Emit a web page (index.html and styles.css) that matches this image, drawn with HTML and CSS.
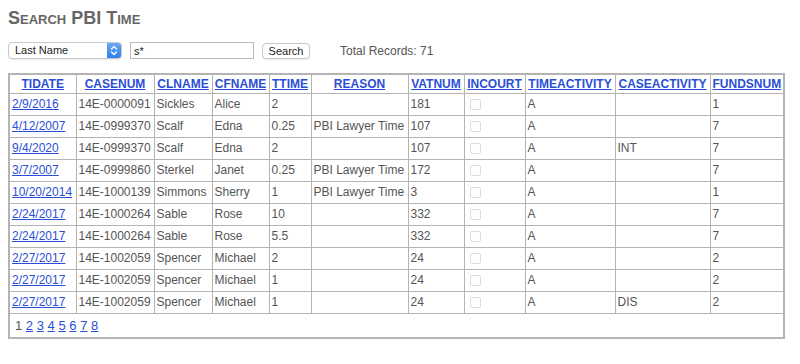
FILE: index.html
```html
<!DOCTYPE html>
<html>
<head>
<meta charset="utf-8">
<title>Search PBI Time</title>
<link rel="stylesheet" href="styles.css">
</head>
<body>
<h1 class="title">Search PBI Time</h1>
<div class="controls">
  <div class="select">
    <span class="select-text">Last Name</span>
    <span class="select-arrow">
      <svg width="8" height="11" viewBox="0 0 8 11"><path d="M1.5 4 L4 1.5 L6.5 4 M1.5 7 L4 9.5 L6.5 7" fill="none" stroke="#fff" stroke-width="1.3" stroke-linecap="round" stroke-linejoin="round"/></svg>
    </span>
  </div>
  <input class="search-input" type="text" value="s*">
  <button class="search-btn" type="button">Search</button>
  <span class="total">Total Records: 71</span>
</div>
<table class="grid">
  <colgroup>
    <col style="width:67px"><col style="width:78px"><col style="width:58px"><col style="width:57px"><col style="width:42px"><col style="width:97px"><col style="width:56px"><col style="width:61px"><col style="width:90px"><col style="width:95px"><col style="width:74px">
  </colgroup>
  <thead>
    <tr>
      <th><a href="#">TIDATE</a></th>
      <th><a href="#">CASENUM</a></th>
      <th><a href="#">CLNAME</a></th>
      <th><a href="#">CFNAME</a></th>
      <th><a href="#">TTIME</a></th>
      <th><a href="#">REASON</a></th>
      <th><a href="#">VATNUM</a></th>
      <th><a href="#">INCOURT</a></th>
      <th><a href="#">TIMEACTIVITY</a></th>
      <th><a href="#">CASEACTIVITY</a></th>
      <th><a href="#">FUNDSNUM</a></th>
    </tr>
  </thead>
  <tbody>
    <tr><td><a href="#">2/9/2016</a></td><td>14E-0000091</td><td>Sickles</td><td>Alice</td><td>2</td><td></td><td>181</td><td><input class="chk" type="checkbox" disabled></td><td>A</td><td></td><td>1</td></tr>
    <tr><td><a href="#">4/12/2007</a></td><td>14E-0999370</td><td>Scalf</td><td>Edna</td><td>0.25</td><td>PBI Lawyer Time</td><td>107</td><td><input class="chk" type="checkbox" disabled></td><td>A</td><td></td><td>7</td></tr>
    <tr><td><a href="#">9/4/2020</a></td><td>14E-0999370</td><td>Scalf</td><td>Edna</td><td>2</td><td></td><td>107</td><td><input class="chk" type="checkbox" disabled></td><td>A</td><td>INT</td><td>7</td></tr>
    <tr><td><a href="#">3/7/2007</a></td><td>14E-0999860</td><td>Sterkel</td><td>Janet</td><td>0.25</td><td>PBI Lawyer Time</td><td>172</td><td><input class="chk" type="checkbox" disabled></td><td>A</td><td></td><td>7</td></tr>
    <tr><td><a href="#">10/20/2014</a></td><td>14E-1000139</td><td>Simmons</td><td>Sherry</td><td>1</td><td>PBI Lawyer Time</td><td>3</td><td><input class="chk" type="checkbox" disabled></td><td>A</td><td></td><td>1</td></tr>
    <tr><td><a href="#">2/24/2017</a></td><td>14E-1000264</td><td>Sable</td><td>Rose</td><td>10</td><td></td><td>332</td><td><input class="chk" type="checkbox" disabled></td><td>A</td><td></td><td>7</td></tr>
    <tr><td><a href="#">2/24/2017</a></td><td>14E-1000264</td><td>Sable</td><td>Rose</td><td>5.5</td><td></td><td>332</td><td><input class="chk" type="checkbox" disabled></td><td>A</td><td></td><td>7</td></tr>
    <tr><td><a href="#">2/27/2017</a></td><td>14E-1002059</td><td>Spencer</td><td>Michael</td><td>2</td><td></td><td>24</td><td><input class="chk" type="checkbox" disabled></td><td>A</td><td></td><td>2</td></tr>
    <tr><td><a href="#">2/27/2017</a></td><td>14E-1002059</td><td>Spencer</td><td>Michael</td><td>1</td><td></td><td>24</td><td><input class="chk" type="checkbox" disabled></td><td>A</td><td></td><td>2</td></tr>
    <tr><td><a href="#">2/27/2017</a></td><td>14E-1002059</td><td>Spencer</td><td>Michael</td><td>1</td><td></td><td>24</td><td><input class="chk" type="checkbox" disabled></td><td>A</td><td>DIS</td><td>2</td></tr>
  </tbody>
  <tfoot>
    <tr><td class="pager" colspan="11"><span class="cur">1</span> <a href="#">2</a> <a href="#">3</a> <a href="#">4</a> <a href="#">5</a> <a href="#">6</a> <a href="#">7</a> <a href="#">8</a></td></tr>
  </tfoot>
</table>
</body>
</html>
```

FILE: styles.css
```css
body {
  margin: 8px;
  font-family: "Liberation Sans", Arial, Helvetica, sans-serif;
  font-size: 12px;
  color: #555;
  background: #fff;
}
.title {
  margin: 0;
  font-size: 18px;
  line-height: 20px;
  font-weight: bold;
  font-variant: small-caps;
  color: #666;
}
.controls {
  display: flex;
  align-items: center;
  margin-top: 14px;
  height: 17px;
}
.select {
  display: flex;
  align-items: stretch;
  width: 114px;
  height: 17px;
  box-sizing: border-box;
  border: 1px solid #c8c8c8;
  border-radius: 4px;
  background: #fff;
  overflow: hidden;
  box-shadow: 0 1px 1px rgba(0,0,0,0.08);
}
.select-text {
  flex: 1;
  font-size: 11px;
  line-height: 15px;
  padding-left: 6px;
  color: #222;
}
.select-arrow {
  width: 14px;
  display: flex;
  align-items: center;
  justify-content: center;
  background: linear-gradient(#6aa8f7, #2f7ef0);
}
.search-input {
  margin: 0 0 0 8px;
  width: 124px;
  height: 17px;
  box-sizing: border-box;
  border: 1px solid #bdbdbd;
  padding: 0 3px;
  font-family: "Liberation Sans", Arial, sans-serif;
  font-size: 11px;
  color: #222;
  outline: none;
}
.search-btn {
  margin: 0 0 0 8px;
  width: 48px;
  height: 16px;
  box-sizing: border-box;
  border: 1px solid #c6c6c6;
  border-radius: 4px;
  background: #fff;
  padding: 0;
  font-family: "Liberation Sans", Arial, sans-serif;
  font-size: 11px;
  color: #222;
  box-shadow: 0 1px 1px rgba(0,0,0,0.08);
}
.total {
  margin-left: 30px;
  font-size: 12px;
  color: #555;
}
.grid {
  margin-top: 14px;
  border-collapse: collapse;
  table-layout: fixed;
  width: 776px;
  border: 2px solid #b4b4b4;
}
.grid th,
.grid td {
  border: 1px solid #b4b4b4;
  padding: 3px 2px;
  line-height: 15px;
  text-align: left;
  white-space: nowrap;
  overflow: hidden;
  vertical-align: middle;
}
.grid th {
  padding: 1px 2px;
  line-height: 16px;
  text-align: center;
  font-weight: bold;
}
.grid a {
  color: #2a4fd6;
  text-decoration: underline;
}
.chk {
  -webkit-appearance: none;
  appearance: none;
  display: block;
  width: 11px;
  height: 11px;
  margin: 0 0 0 3px;
  border: 1px solid #dcdcdc;
  border-radius: 2px;
  background: #fff;
}
.grid td.pager {
  padding: 4px 5px 4px;
  font-size: 13px;
}
.cur {
  color: #555;
}
```
